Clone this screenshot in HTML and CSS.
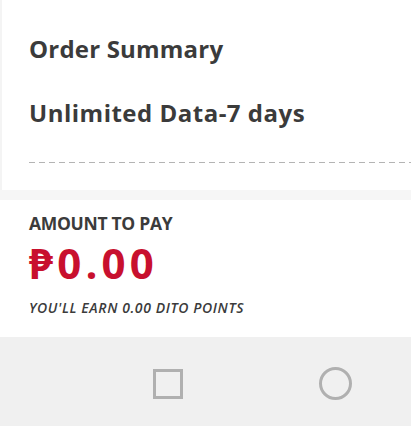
FILE: index.html
```html
<!DOCTYPE html>
<html>
<head>
<meta charset="utf-8">
<link rel="stylesheet" href="styles.css">
</head>
<body>
<div class="page">
  <section class="summary">
    <h1 class="title">Order Summary</h1>
    <h2 class="item">Unlimited Data-7 days</h2>
    <div class="dashes"></div>
  </section>
  <div class="gap"></div>
  <section class="pay">
    <div class="label">AMOUNT TO PAY</div>
    <div class="amount">₱0.00</div>
    <div class="points">YOU'LL EARN 0.00 DITO POINTS</div>
  </section>
  <nav class="navbar">
    <span class="nav-square"></span>
    <span class="nav-circle"></span>
  </nav>
</div>
</body>
</html>
```
FILE: styles.css
```css
html, body {
  margin: 0;
  padding: 0;
  background: #ffffff;
}
.page {
  width: 411px;
  height: 426px;
  display: flex;
  flex-direction: column;
  font-family: "Open Sans", "Noto Sans", sans-serif;
  color: #3b3b3b;
  overflow: hidden;
}
.summary {
  height: 190px;
  box-sizing: border-box;
  padding: 33px 0 0 27px;
  border-left: 2px solid #f4f4f4;
  display: flex;
  flex-direction: column;
}
.title {
  margin: 0;
  font-size: 24px;
  font-weight: 700;
  line-height: 32px;
  letter-spacing: 0.2px;
}
.item {
  margin: 32px 0 0 0;
  font-size: 24px;
  font-weight: 700;
  line-height: 32px;
  letter-spacing: 0.5px;
}
.dashes {
  margin-top: 33px;
  height: 1px;
  background: repeating-linear-gradient(to right, #b4b4b4 0 6px, transparent 6px 10px);
}
.gap {
  height: 10px;
  background: #f6f6f6;
}
.pay {
  height: 137px;
  box-sizing: border-box;
  padding: 12px 0 0 29px;
  display: flex;
  flex-direction: column;
}
.label {
  font-size: 17.5px;
  font-weight: 700;
  line-height: 22px;
  letter-spacing: -0.3px;
}
.amount {
  font-size: 42px;
  font-weight: 700;
  color: #c8102e;
  line-height: 42px;
  letter-spacing: 4.2px;
  margin-top: 8px;
}
.points {
  font-size: 14px;
  font-weight: 600;
  font-style: italic;
  line-height: 18px;
  letter-spacing: 0.6px;
  margin-top: 15px;
}
.navbar {
  flex: 1;
  background: #f0f0f0;
  display: flex;
  align-items: center;
  padding-top: 4px;
}
.nav-square {
  width: 24px;
  height: 24px;
  border: 3px solid #b0b0b0;
  margin-left: 153px;
}
.nav-circle {
  width: 27px;
  height: 27px;
  border: 3px solid #b0b0b0;
  border-radius: 50%;
  margin-left: 136px;
}
```
